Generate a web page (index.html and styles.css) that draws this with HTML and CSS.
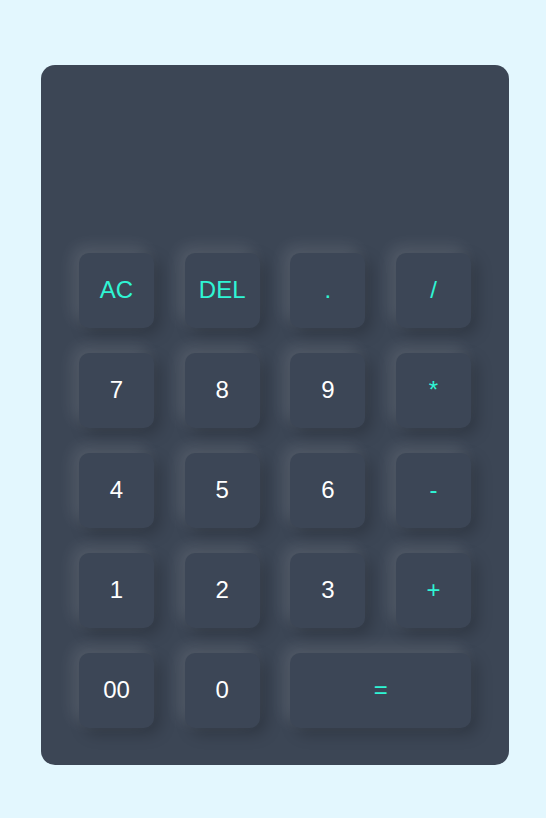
FILE: index.html
```html
<!DOCTYPE html>
<html>
<head>
<meta charset="utf-8">
<link rel="stylesheet" href="styles.css">
</head>
<body>
<div class="calc">
  <div class="display"></div>
  <div class="keys">
    <button class="key op">AC</button>
    <button class="key op">DEL</button>
    <button class="key op">.</button>
    <button class="key op">/</button>
    <button class="key">7</button>
    <button class="key">8</button>
    <button class="key">9</button>
    <button class="key op">*</button>
    <button class="key">4</button>
    <button class="key">5</button>
    <button class="key">6</button>
    <button class="key op">-</button>
    <button class="key">1</button>
    <button class="key">2</button>
    <button class="key">3</button>
    <button class="key op">+</button>
    <button class="key">00</button>
    <button class="key">0</button>
    <button class="key op wide">=</button>
  </div>
</div>
</body>
</html>
```
FILE: styles.css
```css
html, body {
  margin: 0;
  padding: 0;
}
body {
  background: #e3f7fe;
  font-family: "Liberation Sans", Arial, sans-serif;
  padding: 65px 0 0 41px;
  height: 818px;
  box-sizing: border-box;
}
.calc {
  width: 468px;
  height: 700px;
  box-sizing: border-box;
  background: #3c4655;
  border-radius: 14px;
  padding: 0 38px 37px 38px;
  display: flex;
  flex-direction: column;
}
.display {
  height: 188px;
  flex: none;
}
.keys {
  display: grid;
  grid-template-columns: repeat(4, 75px);
  grid-auto-rows: 75px;
  justify-content: space-between;
  row-gap: 25px;
}
.key {
  border: none;
  outline: none;
  background: #3c4656;
  border-radius: 10px;
  color: #ffffff;
  font-family: "Liberation Sans", Arial, sans-serif;
  font-size: 24px;
  line-height: 1;
  padding: 0 0 2px 0;
  box-shadow: -6px -6px 16px rgba(255, 255, 255, 0.12), 6px 6px 16px rgba(0, 0, 0, 0.22);
}
.key.op {
  color: #2ff5d4;
}
.key.wide {
  grid-column: span 2;
}
```
